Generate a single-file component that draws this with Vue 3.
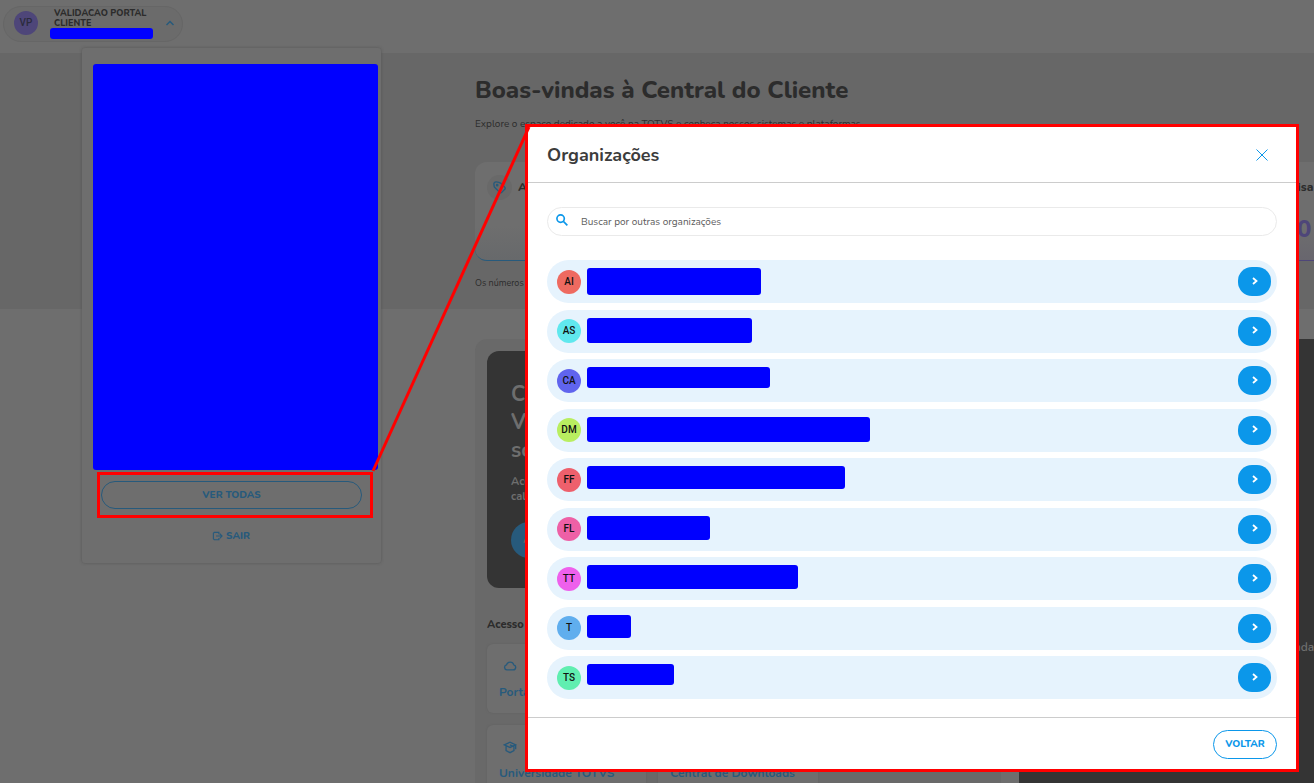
<template>
  <div class="page">
    <header class="topbar">
      <button type="button" class="user">
        <span class="user-avatar">VP</span>
        <span class="user-info">
          <span class="user-name">VALIDACAO PORTAL CLIENTE</span>
          <span class="user-mask"></span>
        </span>
        <svg class="user-arrow" viewBox="0 0 10 6"><path d="M1.500 5 5 1.500 8.500 5" /></svg>
      </button>
    </header>

    <section class="hero">
      <h1>Boas-vindas à Central do Cliente</h1>
      <p class="lead">Explore o espaço dedicado a você na TOTVS e conheça nossos sistemas e plataformas.</p>
      <div class="stats">
        <article class="stat">
          <div class="stat-head">
            <span class="stat-icon">
              <svg viewBox="0 0 16 16">
                <path d="M2.500 7.500 2 4.500A2.300 2.300 0 0 1 4.500 2l3 .5M2.500 7.500l5.700 5.700a1.500 1.500 0 0 0 2.200 0l3.200-3.200a1.500 1.500 0 0 0 0-2.200L9.500 3.500 7.500 2.500" />
                <circle cx="5.500" cy="5.500" r=".7" />
              </svg>
            </span>
            <h2>Atendimentos</h2>
          </div>
        </article>
        <article class="stat purple">
          <div class="stat-head"><h2>Pesquisa</h2></div>
          <strong>0</strong>
        </article>
      </div>
      <p class="note">Os números são atualizados diariamente.</p>
    </section>

    <main class="content">
      <section class="panel">
        <div class="banner">
          <h2>Conheça a<br />Vitrine de<br />soluções</h2>
          <p>Acompanhe o<br />calendário</p>
          <a href="#" class="banner-link">ACESSAR</a>
        </div>
        <h3>Acesso rápido</h3>
        <div class="shortcuts">
          <a v-for="s in shortcuts" :key="s.label" href="#" class="shortcut" :class="s.icon">
            <svg v-if="s.icon === 'cloud'" viewBox="0 0 16 16">
              <path d="M4.500 12.500h7a3 3 0 0 0 .8-5.900A4.300 4.300 0 0 0 4 6.800a2.900 2.900 0 0 0 .5 5.700Z" />
            </svg>
            <svg v-else viewBox="0 0 16 16">
              <path d="M1.500 5.500 8 2.500l6.500 3L8 8.500Zm2 1.500v5L8 14.500l4.500-2.500V7M8 5.500l4.500 2M14.500 5.500v5" />
            </svg>
            <span>{{ s.label }}</span>
          </a>
        </div>
      </section>
      <aside class="side"><p>Saiba mais na agenda</p></aside>
    </main>

    <div class="menu">
      <div class="menu-mask"></div>
      <div class="highlight">
        <button type="button" class="btn-all">VER TODAS</button>
      </div>
      <button type="button" class="btn-exit">
        <svg viewBox="0 0 12 12"><path d="M7.500 3.500v-2h-5l-1 1v6l1 1h5v-2M4.500 5.500H11M8.500 3 11 5.500 8.500 8" /></svg>
        SAIR
      </button>
    </div>

    <div class="modal" role="dialog" aria-labelledby="modal-title">
      <div class="modal-header">
        <h2 id="modal-title">Organizações</h2>
        <button type="button" class="close" aria-label="Fechar">
          <svg viewBox="0 0 12 12"><path d="M.5.5l11 11M11.500.5l-11 11" /></svg>
        </button>
      </div>
      <div class="modal-body">
        <label class="search">
          <svg viewBox="0 0 13 13"><circle cx="5" cy="5" r="4" /><path d="m8 8 4.300 4.300" /></svg>
          <input v-model="search" type="text" placeholder="Buscar por outras organizações" aria-label="Buscar por outras organizações" />
        </label>
        <ul class="orgs">
          <li v-for="(org, i) in orgs" :key="i" class="org">
            <span class="avatar" :style="{ background: org.color }">{{ org.initials }}</span>
            <span class="mask" :style="{ width: org.width + 'px', height: org.height + 'px' }"></span>
            <button type="button" class="go" aria-label="Selecionar">
              <svg viewBox="0 0 6 8"><path d="M1 1l3.500 3L1 7" /></svg>
            </button>
          </li>
        </ul>
      </div>
      <div class="modal-footer">
        <button type="button" class="btn-back">VOLTAR</button>
      </div>
    </div>

    <svg class="connector" viewBox="0 0 160 346"><path d="M2 344 158 0" /></svg>
  </div>
</template>

<script setup>
import { ref } from 'vue'

const search = ref('')

const shortcuts = [
  { label: 'Portal do Cliente', icon: 'cloud' },
  { label: 'Suporte', icon: 'cloud' },
  { label: 'Comunidade', icon: 'cloud' },
  { label: 'Universidade TOTVS', icon: 'school' },
  { label: 'Central de Downloads', icon: 'cloud' }
]

const orgs = [
  { initials: 'AI', color: '#ee6a60', width: 174, height: 27 },
  { initials: 'AS', color: '#60e8ee', width: 165, height: 25 },
  { initials: 'CA', color: '#6064ee', width: 183, height: 21 },
  { initials: 'DM', color: '#b9ee60', width: 283, height: 25 },
  { initials: 'FF', color: '#ee606c', width: 258, height: 23 },
  { initials: 'FL', color: '#ee60a6', width: 123, height: 24 },
  { initials: 'TT', color: '#ee60ec', width: 211, height: 24 },
  { initials: 'T', color: '#60aeee', width: 44, height: 23 },
  { initials: 'TS', color: '#60eeb0', width: 87, height: 21 }
]
</script>

<style>
body {
  margin: 0;
  background: #6e6e6e;
}
</style>

<style scoped>
.page {
  position: relative;
  height: 100vh;
  overflow: hidden;
  background: #6e6e6e;
  color: #2c2c2c;
  font-family: Nunito, "Open Sans", sans-serif;
  font-size: 11px;
}
.page * {
  box-sizing: border-box;
}
h1, h2, h3, p, ul {
  margin: 0;
  padding: 0;
}
button {
  font-family: inherit;
  padding: 0;
  cursor: pointer;
}
a {
  text-decoration: none;
}
svg {
  fill: none;
  stroke: currentColor;
}

.topbar {
  height: 53px;
  padding: 6px 3px;
}
.user {
  display: flex;
  align-items: center;
  width: 180px;
  height: 36px;
  padding: 0 7px 2px 10px;
  border: 1px solid #666;
  border-radius: 18px;
  background: #6b6b6b;
  color: #2c2c2c;
  text-align: left;
}
.user-avatar {
  width: 24px;
  height: 24px;
  border-radius: 50%;
  background: #4e4679;
  color: #2b2b3c;
  font: 500 10px/24px Roboto, sans-serif;
  text-align: center;
}
.user-info {
  flex: 1;
  margin-left: 12px;
}
.user-name {
  display: block;
  width: 110px;
  padding-left: 4px;
  font-size: 9px;
  font-weight: 800;
  line-height: 10px;
}
.user-mask {
  display: block;
  width: 103px;
  height: 11px;
  border-radius: 3px;
  background: #00f;
}
.user-arrow {
  width: 10px;
  height: 6px;
  color: #275a7c;
  stroke-width: 1.5;
}

.hero {
  height: 256px;
  padding: 20px 0 0 475px;
  background: #676767;
}
h1 {
  font-size: 24px;
  font-weight: 800;
  line-height: 34px;
}
.lead {
  margin-top: 9px;
  font-size: 10px;
  line-height: 16px;
  white-space: nowrap;
}
.stats {
  display: flex;
  gap: 12px;
  margin-top: 30px;
}
.stat {
  flex: 0 0 700px;
  height: 99px;
  padding: 12px;
  border-bottom: 1px solid #275a7c;
  border-radius: 12px;
  background: linear-gradient(#6e6e6e 65%, #67696b);
}
.stat.purple {
  flex-basis: 300px;
  padding-left: 76px;
  border-color: #4e4679;
  background: linear-gradient(#6e6e6e 65%, #68666e);
}
.stat-head {
  display: flex;
  align-items: center;
  gap: 6px;
  height: 26px;
}
.stat-head h2 {
  font-size: 12px;
  font-weight: 800;
}
.stat-icon {
  display: flex;
  align-items: center;
  justify-content: center;
  width: 25px;
  height: 25px;
  border-radius: 50%;
  background: #696969;
  color: #275a7c;
}
.stat-icon svg {
  width: 15px;
  height: 15px;
  stroke-width: 1.5;
}
.stat strong {
  display: block;
  margin-left: 34px;
  color: #4e4679;
  font-size: 24px;
  font-weight: 800;
  line-height: 58px;
}
.note {
  margin-top: 15px;
  font-size: 9px;
  line-height: 14px;
}

.content {
  display: flex;
  gap: 18px;
  padding: 30px 0 0 475px;
}
.panel {
  flex: 0 0 526px;
  padding: 12px;
  border-radius: 12px 12px 0 0;
  background: #696969;
}
.banner {
  height: 237px;
  padding: 29px 24px;
  border-radius: 12px;
  background: #343434;
  color: #6e6e6e;
}
.banner h2 {
  font-size: 21px;
  font-weight: 700;
  line-height: 28px;
}
.banner p {
  margin-top: 10px;
  font-weight: 700;
  line-height: 15px;
}
.banner-link {
  display: inline-block;
  margin-top: 18px;
  padding: 0 12px;
  border-radius: 18px;
  background: #275a7c;
  color: #6e6e6e;
  line-height: 36px;
}
h3 {
  margin-top: 29px;
  font-size: 11px;
  font-weight: 800;
  line-height: 16px;
}
.shortcuts {
  display: grid;
  grid-template-columns: repeat(3, 1fr);
  gap: 12px;
  margin-top: 11px;
}
.shortcut {
  display: flex;
  flex-direction: column;
  gap: 10px;
  height: 69px;
  padding: 15px 12px 0;
  border-radius: 6px;
  background: #6e6e6e;
  box-shadow: 0 0 2px #606060;
  color: #275a7c;
  font-size: 12px;
  font-weight: 700;
  line-height: 18px;
  white-space: nowrap;
}
.shortcut svg {
  width: 14px;
  height: 14px;
  margin-left: 4px;
  stroke-width: 1.5;
}
.side {
  flex: 0 0 420px;
  padding: 300px 0 0 176px;
  background: #343434;
  color: #6e6e6e;
  font-size: 12px;
  font-weight: 600;
  white-space: nowrap;
}

.menu {
  position: absolute;
  top: 48px;
  left: 82px;
  width: 299px;
  padding: 16px 3px 13px 11px;
  border-radius: 3px;
  background: #6e6e6e;
  box-shadow: 0 0 3px #555;
}
.menu-mask {
  height: 406px;
  border-radius: 3px;
  background: #00f;
}
.highlight {
  width: 276px;
  margin: 2px 0 0 4px;
  padding: 6px 8px 6px 1px;
  border: 3px solid #f00;
}
.btn-all {
  display: block;
  width: 100%;
  height: 28px;
  border: 1px solid #275a7c;
  border-radius: 14px;
  background: none;
  color: #275a7c;
  font-size: 10px;
  font-weight: 800;
}
.btn-exit {
  display: flex;
  align-items: center;
  justify-content: center;
  gap: 3px;
  width: 276px;
  height: 28px;
  margin-top: 4px;
  border: 0;
  background: none;
  color: #275a7c;
  font-size: 10px;
  font-weight: 800;
}
.btn-exit svg {
  width: 11px;
  height: 11px;
  stroke-width: 1.2;
}

.modal {
  position: absolute;
  inset: 127px 18px 14px 528px;
  display: flex;
  flex-direction: column;
  background: #fff;
  outline: 3px solid #f00;
}
.modal-header {
  display: flex;
  align-items: center;
  justify-content: space-between;
  height: 56px;
  padding: 0 28px 0 19px;
  border-bottom: 1px solid #ccc;
}
.modal-header h2 {
  color: #3c3c3c;
  font-size: 18px;
  font-weight: 700;
}
.close {
  display: flex;
  border: 0;
  background: none;
  color: #0b97ea;
}
.close svg {
  width: 12px;
  height: 12px;
}
.modal-body {
  flex: 1;
  display: flex;
  flex-direction: column;
  gap: 24px;
  padding: 24px 19px 18px;
}
.search {
  display: flex;
  align-items: center;
  gap: 13px;
  height: 29px;
  padding: 0 8px;
  border: 1px solid #eaeaea;
  border-radius: 15px;
}
.search svg {
  width: 12px;
  height: 12px;
  margin-bottom: 3px;
  color: #0b97ea;
  stroke-width: 1.8;
}
.search input {
  flex: 1;
  padding: 0;
  border: 0;
  outline: 0;
  background: none;
  font-family: inherit;
  font-size: 10px;
}
.search input::placeholder {
  color: #5c5c5c;
}
.orgs {
  flex: 1;
  display: flex;
  flex-direction: column;
  justify-content: space-between;
  list-style: none;
}
.org {
  display: flex;
  align-items: center;
  height: 43px;
  padding: 0 6px 0 10px;
  border-radius: 22px;
  background: #e6f3fd;
}
.avatar {
  width: 24px;
  height: 24px;
  margin-right: 6px;
  border-radius: 50%;
  color: #111;
  font: 500 10px/24px Roboto, sans-serif;
  text-align: center;
}
.mask {
  align-self: flex-start;
  margin-top: 8px;
  border-radius: 3px;
  background: #00f;
}
.go {
  display: flex;
  align-items: center;
  justify-content: center;
  width: 33px;
  height: 29px;
  margin-left: auto;
  border: 0;
  border-radius: 14px;
  background: #0b97ea;
  color: #fff;
}
.go svg {
  width: 6px;
  height: 8px;
  margin-bottom: 2px;
  stroke-width: 1.8;
}
.modal-footer {
  display: flex;
  justify-content: flex-end;
  height: 52px;
  padding: 12px 19px 0;
  border-top: 1px solid #ccc;
}
.btn-back {
  width: 64px;
  height: 29px;
  padding-bottom: 2px;
  border: 1px solid #0b97ea;
  border-radius: 15px;
  background: #fff;
  color: #0b97ea;
  font-size: 10px;
  font-weight: 800;
}
/* liga o botão "ver todas" ao modal */
.connector {
  position: absolute;
  top: 127px;
  left: 371px;
  width: 160px;
  height: 346px;
  color: #f00;
  stroke-width: 3;
}
</style>
